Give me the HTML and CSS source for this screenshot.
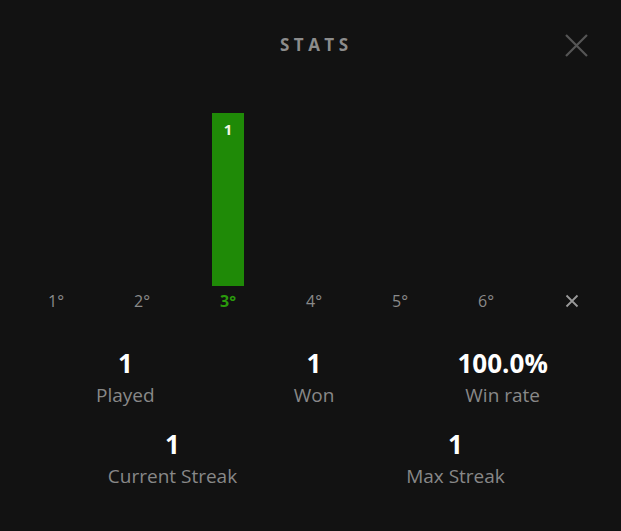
FILE: index.html
```html
<!DOCTYPE html>
<html lang="en">

<head>
    <meta charset="UTF-8">
    <meta name="viewport" content="width=device-width, initial-scale=1.0">
    <title>Stats</title>
    <link rel="stylesheet" href="styles.css">
</head>

<body>
    <div class="modal">
        <div class="modal-header">
            <span></span>
            <h2 class="title">STATS</h2>
            <button class="close-btn" aria-label="Close">
                <svg width="23" height="23" viewBox="0 0 23 23">
                    <path d="M1 1 L22 22 M22 1 L1 22" stroke="#555" stroke-width="2.2" fill="none" />
                </svg>
            </button>
        </div>

        <!-- Distribucion de intentos -->
        <div class="chart">
            <div class="col"><div class="bar-area"></div><span class="col-label">1°</span></div>
            <div class="col"><div class="bar-area"></div><span class="col-label">2°</span></div>
            <div class="col current">
                <div class="bar-area">
                    <div class="bar" style="height: 173px;"><span class="bar-value">1</span></div>
                </div>
                <span class="col-label">3°</span>
            </div>
            <div class="col"><div class="bar-area"></div><span class="col-label">4°</span></div>
            <div class="col"><div class="bar-area"></div><span class="col-label">5°</span></div>
            <div class="col"><div class="bar-area"></div><span class="col-label">6°</span></div>
            <div class="col">
                <div class="bar-area"></div>
                <span class="col-label">
                    <svg width="14" height="14" viewBox="0 0 14 14">
                        <path d="M1.5 1.5 L12.5 12.5 M12.5 1.5 L1.5 12.5" stroke="#999" stroke-width="1.8" fill="none" />
                    </svg>
                </span>
            </div>
        </div>

        <div class="stats stats-3">
            <div class="stat"><span class="stat-num">1</span><span class="stat-label">Played</span></div>
            <div class="stat"><span class="stat-num">1</span><span class="stat-label">Won</span></div>
            <div class="stat"><span class="stat-num">100.0%</span><span class="stat-label">Win rate</span></div>
        </div>
        <div class="stats stats-2">
            <div class="stat"><span class="stat-num">1</span><span class="stat-label">Current Streak</span></div>
            <div class="stat"><span class="stat-num">1</span><span class="stat-label">Max Streak</span></div>
        </div>
    </div>
</body>

</html>
```

FILE: styles.css
```css
body {
    font-family: "Open Sans", "Liberation Sans", sans-serif;
    margin: 0;
    padding: 0;
    background-color: #121212;
    color: #888;
}

.modal {
    padding: 0 6px 0 13px;
}

/* Cabecera */

.modal-header {
    display: grid;
    grid-template-columns: 1fr auto 1fr;
    align-items: center;
    height: 46px;
    padding-top: 22px;
}

.title {
    margin: 0;
    font-size: 17px;
    font-weight: 700;
    letter-spacing: 4.5px;
    margin-right: -4.5px;
    color: #8c8c8c;
    line-height: 24px;
}

.close-btn {
    justify-self: end;
    margin-right: 27px;
    background: none;
    border: none;
    padding: 0;
    display: flex;
    cursor: pointer;
}

/* Grafica */

.chart {
    display: grid;
    grid-template-columns: repeat(7, 1fr);
}

.col {
    display: flex;
    flex-direction: column;
    align-items: center;
}

.bar-area {
    height: 218px;
    display: flex;
    align-items: flex-end;
}

.bar {
    width: 32px;
    background-color: #1f8a07;
    display: flex;
    justify-content: center;
}

.bar-value {
    font-size: 15px;
    font-weight: 700;
    color: #f4f7e4;
    margin-top: 7px;
    line-height: 18px;
}

.col-label {
    margin-top: 5px;
    font-size: 16px;
    line-height: 20px;
    height: 20px;
    display: flex;
    align-items: center;
    color: #8a8a8a;
}

.current .col-label {
    color: #2a9a0c;
    font-weight: 700;
}

/* Numeros */

.stats {
    display: grid;
    padding: 0 18px;
}

.stats-3 {
    grid-template-columns: repeat(3, 1fr);
    margin-top: 37px;
}

.stats-2 {
    grid-template-columns: repeat(2, 1fr);
    margin-top: 18px;
}

.stat {
    display: flex;
    flex-direction: column;
    align-items: center;
}

.stat-num {
    font-size: 26px;
    font-weight: 700;
    color: #fff;
    line-height: 31px;
}

.stat-label {
    font-size: 19px;
    line-height: 32px;
    color: #888;
}
```
